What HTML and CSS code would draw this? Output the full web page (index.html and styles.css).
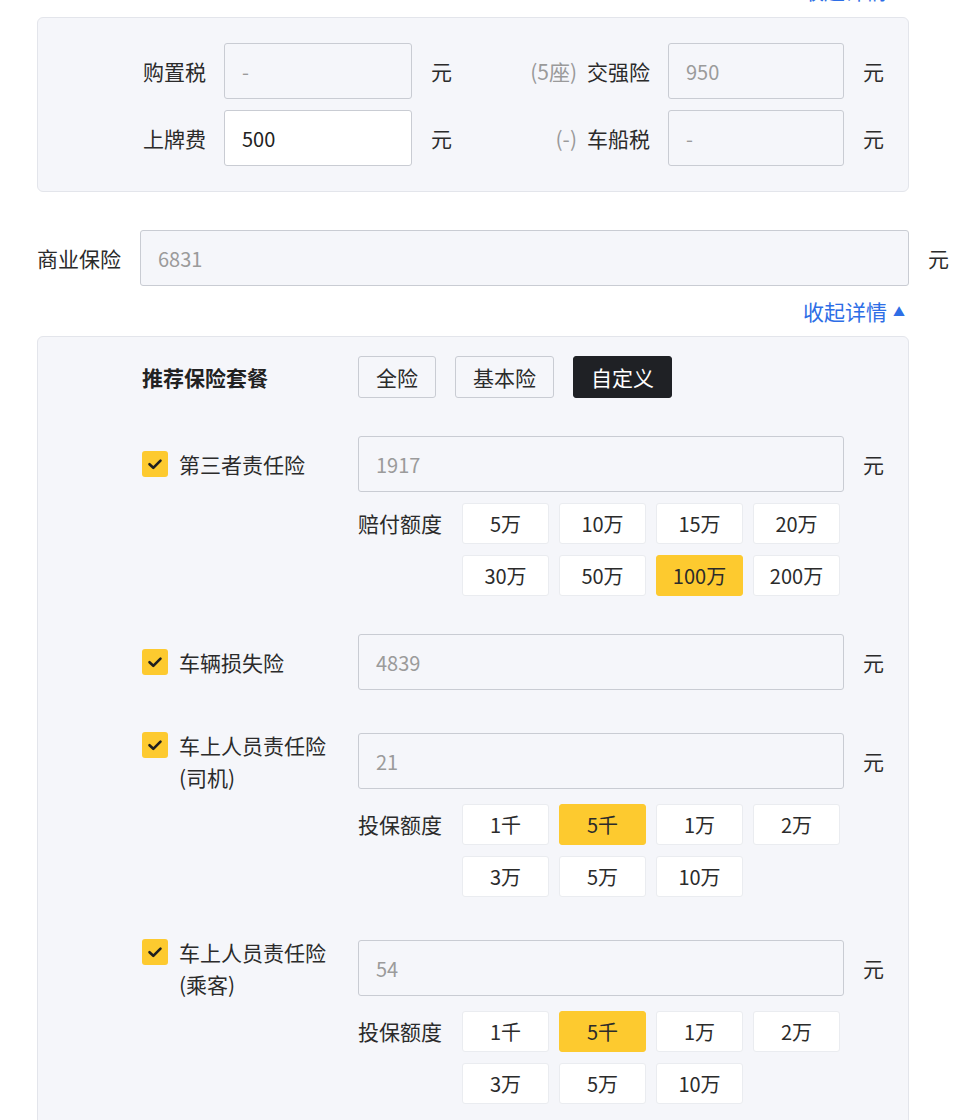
FILE: index.html
```html
<!DOCTYPE html>
<html lang="zh-CN">
<head>
<meta charset="utf-8">
<title>保险费用</title>
<link rel="stylesheet" href="styles.css">
</head>
<body>
<div class="page">
  <div class="toggle toggle-top"><a class="link">收起详情<span class="tri">▲</span></a></div>

  <section class="panel panel-tax">
    <div class="tax-row">
      <span class="lbl">购置税</span>
      <div class="field ro"><span class="ph">-</span></div>
      <span class="unit">元</span>
      <span class="lbl lbl2"><span class="note">(5座)</span>交强险</span>
      <div class="field field-s ro"><span class="ph">950</span></div>
      <span class="unit">元</span>
    </div>
    <div class="tax-row">
      <span class="lbl">上牌费</span>
      <div class="field edit"><span class="val">500</span></div>
      <span class="unit">元</span>
      <span class="lbl lbl2"><span class="note">(-)</span>车船税</span>
      <div class="field field-s ro"><span class="ph">-</span></div>
      <span class="unit">元</span>
    </div>
  </section>

  <div class="biz-row">
    <span class="biz-lbl">商业保险</span>
    <div class="field ro biz-field"><span class="ph">6831</span></div>
    <span class="unit">元</span>
  </div>

  <div class="toggle"><a class="link">收起详情<span class="tri">▲</span></a></div>

  <section class="panel panel-ins">
    <div class="pkg-row">
      <span class="pkg-lbl">推荐保险套餐</span>
      <div class="pkg-btns">
        <button class="pkg">全险</button>
        <button class="pkg">基本险</button>
        <button class="pkg active">自定义</button>
      </div>
    </div>

    <div class="item">
      <div class="item-lbl">
        <span class="chk"><svg viewBox="0 0 26 26" width="26" height="26"><path d="M7.5 13.2 L11.3 16.8 L18.5 9.6" fill="none" stroke="#1f1f1f" stroke-width="2.6" stroke-linecap="round" stroke-linejoin="round"/></svg></span>
        <span class="item-txt">第三者责任险</span>
      </div>
      <div class="field ro"><span class="ph">1917</span></div>
      <span class="unit">元</span>
      <div class="opts">
        <span class="opts-lbl">赔付额度</span>
        <div class="opt-grid">
          <span class="opt">5万</span>
          <span class="opt">10万</span>
          <span class="opt">15万</span>
          <span class="opt">20万</span>
          <span class="opt">30万</span>
          <span class="opt">50万</span>
          <span class="opt sel">100万</span>
          <span class="opt">200万</span>
        </div>
      </div>
    </div>

    <div class="item">
      <div class="item-lbl">
        <span class="chk"><svg viewBox="0 0 26 26" width="26" height="26"><path d="M7.5 13.2 L11.3 16.8 L18.5 9.6" fill="none" stroke="#1f1f1f" stroke-width="2.6" stroke-linecap="round" stroke-linejoin="round"/></svg></span>
        <span class="item-txt">车辆损失险</span>
      </div>
      <div class="field ro"><span class="ph">4839</span></div>
      <span class="unit">元</span>
    </div>

    <div class="item item-two">
      <div class="item-lbl">
        <span class="chk"><svg viewBox="0 0 26 26" width="26" height="26"><path d="M7.5 13.2 L11.3 16.8 L18.5 9.6" fill="none" stroke="#1f1f1f" stroke-width="2.6" stroke-linecap="round" stroke-linejoin="round"/></svg></span>
        <span class="item-txt">车上人员责任险<br>(司机)</span>
      </div>
      <div class="field ro"><span class="ph">21</span></div>
      <span class="unit">元</span>
      <div class="opts">
        <span class="opts-lbl">投保额度</span>
        <div class="opt-grid">
          <span class="opt">1千</span>
          <span class="opt sel">5千</span>
          <span class="opt">1万</span>
          <span class="opt">2万</span>
          <span class="opt">3万</span>
          <span class="opt">5万</span>
          <span class="opt">10万</span>
        </div>
      </div>
    </div>

    <div class="item item-two">
      <div class="item-lbl">
        <span class="chk"><svg viewBox="0 0 26 26" width="26" height="26"><path d="M7.5 13.2 L11.3 16.8 L18.5 9.6" fill="none" stroke="#1f1f1f" stroke-width="2.6" stroke-linecap="round" stroke-linejoin="round"/></svg></span>
        <span class="item-txt">车上人员责任险<br>(乘客)</span>
      </div>
      <div class="field ro"><span class="ph">54</span></div>
      <span class="unit">元</span>
      <div class="opts">
        <span class="opts-lbl">投保额度</span>
        <div class="opt-grid">
          <span class="opt">1千</span>
          <span class="opt sel">5千</span>
          <span class="opt">1万</span>
          <span class="opt">2万</span>
          <span class="opt">3万</span>
          <span class="opt">5万</span>
          <span class="opt">10万</span>
        </div>
      </div>
    </div>
  </section>
</div>
</body>
</html>
```

FILE: styles.css
```css
* { box-sizing: border-box; }
html, body { margin: 0; padding: 0; background: #ffffff; }
body {
  font-family: "Noto Sans CJK SC", "Noto Sans", sans-serif;
  font-size: 21px;
  color: #2b2b2b;
  overflow: hidden;
}
.page {
  width: 960px;
  padding: 0 11px 0 37px;
}

/* collapse link */
.toggle {
  width: 872px;
  height: 30px;
  line-height: 30px;
  text-align: right;
  padding-right: 4px;
  margin: 10px 0;
}
.toggle-top { margin-top: -25px; margin-bottom: 12px; }
.link {
  color: #2e6ee6;
  font-size: 21px;
  text-decoration: none;
  cursor: pointer;
}
.tri {
  font-size: 12px;
  margin-left: 6px;
  position: relative;
  top: -3px;
}

/* panels */
.panel {
  width: 872px;
  background: #f5f6fa;
  border: 1px solid #e3e5eb;
  border-radius: 6px;
}
.panel-tax {
  padding: 25px 24px 25px 0;
}
.tax-row {
  display: flex;
  align-items: center;
  height: 56px;
}
.tax-row + .tax-row { margin-top: 11px; }
.lbl {
  width: 168px;
  text-align: right;
  flex: none;
  white-space: nowrap;
}
.lbl2 { flex: 1; width: auto; }
.note { color: #9a9a9a; margin-right: 10px; }

.field {
  height: 56px;
  border: 1px solid #c9ccd3;
  border-radius: 3px;
  display: flex;
  align-items: center;
  padding: 0 17px;
  font-size: 20px;
  flex: none;
}
.tax-row .field { width: 188px; margin-left: 18px; }
.tax-row .field-s { width: 176px; }
.field.ro { background: #f5f6fa; }
.field.edit { background: #ffffff; }
.ph { color: #9b9b9b; }
.val { color: #222222; }
.unit {
  margin-left: 19px;
  width: 21px;
  flex: none;
  white-space: nowrap;
}
.tax-row .unit:nth-of-type(1) { margin-left: 20px; }

/* commercial insurance row */
.biz-row {
  display: flex;
  align-items: center;
  margin-top: 38px;
}
.biz-lbl { width: 85px; margin-right: 18px; white-space: nowrap; flex: none; }
.biz-field { flex: 1; }

/* insurance panel */
.panel-ins {
  padding: 19px 24px 40px 104px;
  min-height: 800px;
}
.pkg-row {
  display: grid;
  grid-template-columns: 216px auto;
  align-items: center;
}
.pkg-lbl { font-weight: bold; color: #222; }
.pkg-btns { display: flex; gap: 19px; }
.pkg {
  font-family: inherit;
  font-size: 21px;
  height: 42px;
  padding: 0 17px;
  background: #f5f6fa;
  border: 1px solid #c9ccd3;
  border-radius: 3px;
  color: #2b2b2b;
}
.pkg.active {
  background: #1f2125;
  border-color: #1f2125;
  color: #ffffff;
}

.item {
  display: grid;
  grid-template-columns: 216px 486px auto;
  align-items: center;
  margin-top: 38px;
}
.item-two { margin-top: 39px; }
.item .field { width: 486px; }
.item-lbl {
  display: flex;
  align-items: flex-start;
}
.chk {
  width: 26px;
  height: 26px;
  margin-top: 3px;
  background: #fdca2f;
  border-radius: 3px;
  flex: none;
  display: block;
}
.chk svg { display: block; }
.item-txt {
  margin-left: 11px;
  line-height: 32px;
  white-space: nowrap;
}
.opts {
  grid-column: 2 / 4;
  display: flex;
  align-items: flex-start;
  margin-top: 11px;
}
.opts-lbl {
  width: 104px;
  line-height: 41px;
  flex: none;
  white-space: nowrap;
}
.opt-grid {
  display: grid;
  grid-template-columns: repeat(4, 87px);
  grid-auto-rows: 41px;
  column-gap: 10px;
  row-gap: 11px;
}
.opt {
  background: #ffffff;
  border: 1px solid #eaecf0;
  border-radius: 3px;
  display: flex;
  align-items: center;
  justify-content: center;
  font-size: 20px;
  color: #2b2b2b;
}
.opt.sel {
  background: #fdca2f;
  border-color: #fdca2f;
}
```
